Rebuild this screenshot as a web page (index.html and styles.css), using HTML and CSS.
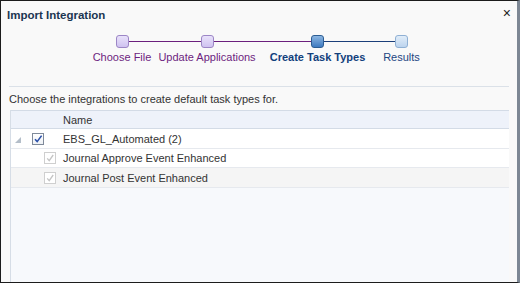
FILE: index.html
```html
<!DOCTYPE html>
<html>
<head>
<meta charset="utf-8">
<link rel="stylesheet" href="styles.css">
</head>
<body>
<div class="dialog">
  <div class="header">
    <div class="title">Import Integration</div>
    <div class="close">&#xD7;</div>
  </div>
  <div class="train">
    <div class="stop visited first s1">
      <div class="node"><span class="dot"></span></div>
      <div class="label">Choose File</div>
    </div>
    <div class="stop visited s2">
      <div class="node"><span class="dot"></span></div>
      <div class="label">Update Applications</div>
    </div>
    <div class="stop current s3">
      <div class="node"><span class="dot"></span></div>
      <div class="label">Create Task Types</div>
    </div>
    <div class="stop unvisited last s4">
      <div class="node"><span class="dot"></span></div>
      <div class="label">Results</div>
    </div>
  </div>
  <div class="content">
    <div class="instr">Choose the integrations to create default task types for.</div>
    <div class="table">
      <div class="row head">
        <div class="c1"></div>
        <div class="c2">Name</div>
      </div>
      <div class="row">
        <div class="c1">
          <span class="twisty"></span>
          <span class="cb on"><svg viewBox="0 0 12 12" width="12" height="12"><path d="M3 6.2 L5.2 8.6 L9.6 2.6" fill="none" stroke="#2a4fa8" stroke-width="1.6"/></svg></span>
        </div>
        <div class="c2">EBS_GL_Automated (2)</div>
      </div>
      <div class="row r2">
        <div class="c1 ind">
          <span class="cb dis"><svg viewBox="0 0 12 12" width="12" height="12"><path d="M3.2 6.4 L5.2 8.6 L9.2 3" fill="none" stroke="#c4c4c4" stroke-width="1.3"/></svg></span>
        </div>
        <div class="c2">Journal Approve Event Enhanced</div>
      </div>
      <div class="row alt">
        <div class="c1 ind">
          <span class="cb dis"><svg viewBox="0 0 12 12" width="12" height="12"><path d="M3.2 6.4 L5.2 8.6 L9.2 3" fill="none" stroke="#c4c4c4" stroke-width="1.3"/></svg></span>
        </div>
        <div class="c2">Journal Post Event Enhanced</div>
      </div>
    </div>
  </div>
</div>
</body>
</html>
```

FILE: styles.css
```css
html, body {
  margin: 0;
  padding: 0;
}
body {
  width: 520px;
  height: 283px;
  font-family: "Liberation Sans", Arial, sans-serif;
  font-size: 11px;
  color: #333;
}
.dialog {
  box-sizing: border-box;
  width: 520px;
  height: 283px;
  border: 1px solid #1c1c1c;
  border-right: 3px solid #7d8794;
  background: #f9f9f9;
  display: flex;
  flex-direction: column;
}
.header {
  height: 27px;
  display: flex;
  align-items: center;
  justify-content: space-between;
  padding: 0 6px 0 6px;
}
.title {
  font-weight: bold;
  font-size: 11.5px;
  color: #1b3551;
  padding-top: 1px;
}
.close {
  font-size: 14px;
  line-height: 14px;
  color: #222;
  margin-top: -3px;
}
.train {
  display: flex;
  justify-content: flex-start;
  height: 58px;
  box-sizing: border-box;
  padding-top: 7px;
  padding-left: 94px;
}
.stop {
  display: flex;
  flex-direction: column;
  align-items: center;
  position: relative;
}
.s1 { width: 54px; }
.s2 { width: 96px; margin-left: 10px; }
.s3 { width: 105px; margin-left: 10px; }
.s4 { width: 35px; margin-left: 14px; }
.node {
  position: relative;
  width: 100%;
  height: 13px;
  display: flex;
  justify-content: center;
}
.node::before, .node::after {
  content: "";
  position: absolute;
  top: 6px;
  height: 1px;
  width: calc(50% + 7px);
}
.node::before { right: 50%; }
.node::after { left: 50%; }
.first .node::before, .last .node::after { display: none; }
.visited .node::before, .visited .node::after, .current .node::before { background: #6b1f7d; }
.current .node::after, .unvisited .node::before { background: #1c3f7a; }
.dot {
  position: relative;
  z-index: 1;
  box-sizing: border-box;
  width: 13px;
  height: 13px;
  border-radius: 3px;
}
.visited .dot {
  border: 1px solid #9c86c6;
  background: linear-gradient(#e9e2fb, #cfc2f0);
}
.current .dot {
  border: 1px solid #2c5d93;
  background: linear-gradient(#8cb6e2, #3e7ac0);
}
.unvisited .dot {
  border: 1px solid #8fb0d4;
  background: linear-gradient(#e1edf9, #bdd4ee);
}
.label {
  margin-top: 3px;
  font-size: 11px;
  white-space: nowrap;
}
.visited .label { color: #6d1e80; }
.current .label { color: #12407c; font-weight: bold; }
.unvisited .label { color: #1d4682; }
.content {
  flex: 1;
  margin: 0 8px 0 8px;
  border-top: 1px solid #dbe1e8;
  display: flex;
  flex-direction: column;
}
.instr {
  padding: 6px 0 0 0;
  height: 17px;
  color: #333;
}
.table {
  flex: 1;
  border-left: 1px solid #d6dde6;
  background: #f7f9fc;
  margin-left: 1px;
}
.row {
  display: flex;
  height: 19px;
  align-items: center;
  background: #fff;
  border-bottom: 1px solid #e6e9ee;
}
.row.r2 { height: 18px; }
.row.head {
  height: 17px;
  background: #eef2fa;
  border-top: 1px solid #d3dbe6;
  border-bottom: 1px solid #d3dbe6;
}
.row.alt { background: #f5f5f5; }
.c1 {
  width: 51px;
  display: flex;
  align-items: center;
  padding-left: 1px;
}
.c1.ind { padding-left: 33px; width: 19px; }
.c2 { color: #333; }
.twisty {
  width: 0;
  height: 0;
  border-left: 6px solid transparent;
  border-bottom: 6px solid #b4bec9;
  margin: 3px 11px 0 3px;
}
.cb {
  box-sizing: border-box;
  width: 12px;
  height: 12px;
  display: inline-block;
  background: #fff;
}
.cb svg { display: block; margin: -1px; }
.cb.on { border: 1px solid #7f8a9a; background: linear-gradient(#fff, #eef1f5); }
.cb.dis { border: 1px solid #cfcfcf; }
```
